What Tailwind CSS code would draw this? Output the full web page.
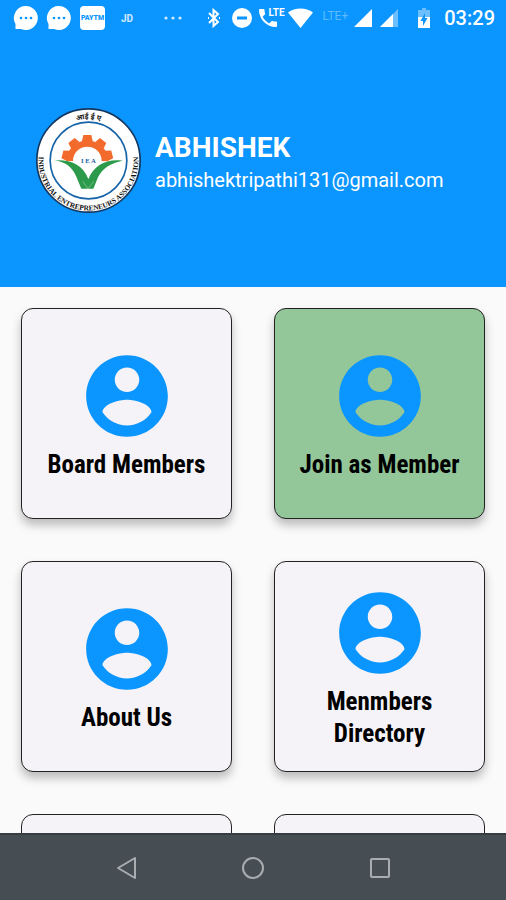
<!DOCTYPE html>
<html lang="en">
<head>
    <meta charset="UTF-8">
    <meta name="viewport" content="width=device-width, initial-scale=1.0">
    <title>Industrial Entrepreneurs Association</title>
    <script src="https://cdn.jsdelivr.net/npm/@tailwindcss/browser@4"></script>
</head>
<body class="h-screen flex flex-col overflow-hidden bg-[#fafafa] font-[Roboto,sans-serif]">
    <!-- shared icons -->
    <svg class="hidden">
        <symbol id="account" viewBox="0 0 24 24">
            <path d="M12 2C6.48 2 2 6.48 2 12s4.48 10 10 10 10-4.48 10-10S17.52 2 12 2zm0 3c1.66 0 3 1.34 3 3s-1.34 3-3 3-3-1.34-3-3 1.34-3 3-3zm0 14.2c-2.5 0-4.71-1.28-6-3.22.03-1.99 4-3.08 6-3.08 1.99 0 5.97 1.09 6 3.08-1.29 1.94-3.5 3.22-6 3.22z"/>
        </symbol>
        <symbol id="bubble" viewBox="0 0 26 26">
            <path fill="#fff" d="M13 1a12 12 0 1 1-5 23H2.500V19A12 12 0 0 1 13 1z"/>
            <g fill="#0a95ff"><circle cx="8" cy="13" r="1.300"/><circle cx="13" cy="13" r="1.300"/><circle cx="18" cy="13" r="1.300"/></g>
        </symbol>
    </svg>

    <header class="h-[287px] shrink-0 flex flex-col bg-[#0a95ff] text-white">
        <!-- status bar -->
        <div class="h-9 shrink-0 flex items-center justify-between pl-[13px] pr-[11px]">
            <div class="flex items-center">
                <svg class="w-[26px] h-[26px]"><use href="#bubble"/></svg>
                <svg class="w-[26px] h-[26px] ml-[7px]"><use href="#bubble"/></svg>
                <span class="w-[25px] h-6 ml-2 rounded-sm bg-white text-[#0a95ff] text-[7px] font-black flex items-center justify-center">PAYTM</span>
                <span class="ml-4 text-[10px] font-bold text-white/80">JD</span>
                <svg class="w-5 h-2 ml-[30px]" viewBox="0 0 20 8" fill="#fff" fill-opacity=".8"><circle cx="3" cy="4" r="1.600"/><circle cx="10" cy="4" r="1.600"/><circle cx="17" cy="4" r="1.600"/></svg>
            </div>
            <div class="flex items-center">
                <!-- bluetooth -->
                <svg class="w-[14px] h-5" viewBox="0 0 14 20" fill="none" stroke="#fff" stroke-width="2"><path d="M2 5l9 9-4.500 4V2L11 6l-9 9"/><path d="M1 10h1M12 10h1"/></svg>
                <!-- do not disturb -->
                <svg class="w-5 h-5 ml-[11px]" viewBox="0 0 20 20"><circle cx="10" cy="10" r="10" fill="#fff"/><path d="M5 10h10" stroke="#0a95ff" stroke-width="3"/></svg>
                <!-- volte call -->
                <span class="relative w-[27px] h-5 ml-[6px]">
                    <svg class="w-5 h-5" viewBox="2 2 20 20" fill="#fff"><path d="M6.620 10.790c1.440 2.830 3.760 5.140 6.590 6.590l2.200-2.200c.27-.27.67-.36 1.020-.24 1.120.37 2.330.57 3.570.57.55 0 1 .45 1 1V20c0 .55-.45 1-1 1-9.390 0-17-7.610-17-17 0-.55.45-1 1-1h3.500c.55 0 1 .45 1 1 0 1.250.2 2.450.57 3.570.11.35.03.74-.25 1.020l-2.200 2.200z"/></svg>
                    <span class="absolute right-0 top-0 text-[10px] leading-[10px] font-bold">LTE</span>
                </span>
                <!-- wifi -->
                <svg class="w-[25px] h-5 ml-[3px]" viewBox="0 0 25 20" fill="#fff"><path d="M0 4.500C7-1 18-1 25 4.500L12.500 20z"/></svg>
                <span class="ml-[10px] text-[12px] leading-4 text-white/35 -mt-1">LTE+</span>
                <svg class="w-[18px] h-[18px] ml-[6px]" viewBox="0 0 18 18" fill="#fff"><path d="M18 0v18H0z"/></svg>
                <svg class="w-[18px] h-[18px] ml-2" viewBox="0 0 18 18" fill="#fff"><path d="M18 0v18H0z" fill-opacity=".4"/><path d="M13 5v13H0z"/></svg>
                <!-- battery -->
                <svg class="w-3 h-5 ml-5" viewBox="0 0 12 20"><path fill="#fff" fill-opacity=".4" d="M4 0h4v2h4v7H0V2h4z"/><path fill="#fff" d="M0 9h12v11H0z"/><path fill="#0a95ff" d="M7 5L2.500 13H5v5l4.500-8H7z"/></svg>
                <span class="ml-[14px] text-[20px] leading-5 font-medium">03:29</span>
            </div>
        </div>

        <div class="flex-1 flex items-center pl-9 pb-[2px] gap-[14px]">
            <svg class="w-[105px] h-[105px]" viewBox="0 0 315 315">
                <defs>
                    <path id="arcBottom" d="M10 130A150 150 0 1 0 305 130"/>
                    <path id="arcTop" d="M33 157.500a124.500 124.500 0 0 1 249 0"/>
                </defs>
                <circle cx="157.500" cy="157.500" r="155" fill="#fff" stroke="#14365e" stroke-width="5"/>
                <circle cx="157.500" cy="157.500" r="115" fill="#fff" stroke="#1663a8" stroke-width="5"/>
                <text font-family="Liberation Serif, serif" font-size="22" font-weight="700" fill="#111" text-anchor="middle"><textPath href="#arcBottom" startOffset="50%">INDUSTRIAL ENTREPRENEURS ASSOCIATION</textPath></text>
                <text font-family="Noto Sans, sans-serif" font-size="22" font-weight="700" fill="#111" text-anchor="middle"><textPath href="#arcTop" startOffset="50%">आई ई ए</textPath></text>
                <!-- half gear -->
                <g fill="#f26a2c">
                    <path d="M91 160a63 63 0 0 1 126 0l-20-1a43 43 0 0 0-86 0z"/>
                    <path id="tooth" d="M138 99l4-18h24l4 18z"/>
                    <use href="#tooth" transform="rotate(-38 154 158)"/>
                    <use href="#tooth" transform="rotate(38 154 158)"/>
                    <use href="#tooth" transform="rotate(-76 154 158)"/>
                    <use href="#tooth" transform="rotate(76 154 158)"/>
                </g>
                <text x="157" y="164" text-anchor="middle" font-family="Liberation Serif, serif" font-size="20" font-weight="700" fill="#1663a8">I E A</text>
                <!-- leaves -->
                <path fill="#2c9a4b" d="M56 157c44-3 84 10 101 56 17-42 56-62 103-55-34 7-60 21-74 50l-14 34h-36l-16-38c-12-27-32-42-64-47z"/>
                <path d="M140 220l16 22 17-22" fill="none" stroke="#fff" stroke-width="1"/>
            </svg>
            <div class="pt-[7px]">
                <h1 class="text-[28px] leading-8 font-bold">ABHISHEK</h1>
                <p class="text-[20px] leading-8">abhishektripathi131@gmail.com</p>
            </div>
        </div>
    </header>

    <main class="flex-1 min-h-0 overflow-y-auto [scrollbar-width:none] pt-[21px] px-[21px]">
        <div class="grid grid-cols-2 gap-[42px] text-[25px] leading-8 font-bold text-black font-['Liberation_Sans_Narrow','Roboto_Condensed',Roboto,sans-serif]">
            <button class="aspect-square flex flex-col items-center justify-center gap-1 rounded-xl border border-[#222] bg-[#f5f3f7] shadow-[0_6px_10px_rgba(0,0,0,0.25)]">
                <svg class="w-[98px] h-[98px] fill-[#0a95ff]"><use href="#account"/></svg>
                Board Members
            </button>
            <button class="aspect-square flex flex-col items-center justify-center gap-1 rounded-xl border border-[#222] bg-[#93c799] shadow-[0_6px_10px_rgba(0,0,0,0.25)]">
                <svg class="w-[98px] h-[98px] fill-[#0a95ff]"><use href="#account"/></svg>
                Join as Member
            </button>
            <button class="aspect-square flex flex-col items-center justify-center gap-1 rounded-xl border border-[#222] bg-[#f5f3f7] shadow-[0_6px_10px_rgba(0,0,0,0.25)]">
                <svg class="w-[98px] h-[98px] fill-[#0a95ff]"><use href="#account"/></svg>
                About Us
            </button>
            <button class="aspect-square flex flex-col items-center justify-center gap-1 rounded-xl border border-[#222] bg-[#f5f3f7] shadow-[0_6px_10px_rgba(0,0,0,0.25)]">
                <svg class="w-[98px] h-[98px] fill-[#0a95ff]"><use href="#account"/></svg>
                <span>Menmbers<br>Directory</span>
            </button>
            <button class="aspect-square rounded-xl border border-[#222] bg-[#f5f3f7]"></button>
            <button class="aspect-square rounded-xl border border-[#222] bg-[#f5f3f7]"></button>
        </div>
    </main>

    <!-- system navigation -->
    <nav class="h-[67px] shrink-0 grid grid-cols-8 items-center border-t-2 border-[#353c42] bg-[#464d53]">
        <button aria-label="Back" class="col-start-2 col-span-2 flex justify-center"><svg class="w-6 h-6" viewBox="0 0 24 24" fill="none" stroke="#a9adb0" stroke-width="2" stroke-linejoin="round"><path d="M20 2v20L3 12z"/></svg></button>
        <button aria-label="Home" class="col-span-2 flex justify-center"><svg class="w-6 h-6" viewBox="0 0 24 24" fill="none" stroke="#a9adb0" stroke-width="2"><circle cx="12" cy="12" r="10"/></svg></button>
        <button aria-label="Recent" class="col-span-2 flex justify-center"><svg class="w-6 h-6" viewBox="0 0 24 24" fill="none" stroke="#a9adb0" stroke-width="2"><rect x="3" y="3" width="18" height="18" rx="1"/></svg></button>
    </nav>
</body>
</html>
